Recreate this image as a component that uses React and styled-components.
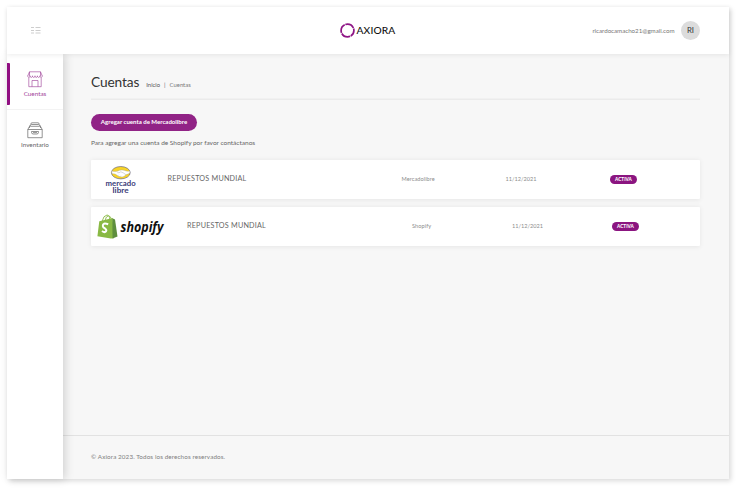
import React from "react";
import styled, { createGlobalStyle } from "styled-components";

const Global = createGlobalStyle`
  * { box-sizing: border-box; }
  html, body { margin: 0; background: #fff; }
  body { height: 491px; overflow: hidden; font-family: Lato, "Open Sans", sans-serif; color: #555; }
  button { font-family: inherit; }
`;

const Page = styled.div`
  width: 740px;
  height: 491px;
  padding: 7px 11.5px 12px 7px;
`;
const Shell = styled.div`
  height: 472px;
  display: flex;
  flex-direction: column;
  background: #f7f7f7;
  box-shadow: 2px 2px 5px rgba(0, 0, 0, 0.15);
`;
const Header = styled.header`
  position: relative;
  z-index: 2;
  flex: none;
  height: 46.5px;
  display: grid;
  grid-template-columns: 333px 1fr auto;
  align-items: center;
  padding-right: 28.5px;
  background: #fff;
  box-shadow: 0 1px 5px rgba(0, 0, 0, 0.08);
`;
const MenuButton = styled.div`
  height: 8px;
  padding-left: 24px;
  svg { display: block; }
`;
const Brand = styled.div`
  display: flex;
  align-items: center;
  gap: 1.5px;
  height: 16px;
`;
const Text = styled.span`
  display: block;
  margin: 0;
  white-space: nowrap;
  line-height: 1.2;
  font-size: ${(p) => p.$size}px;
  font-weight: ${(p) => p.$weight || 400};
  color: ${(p) => p.$color || "#666"};
  letter-spacing: ${(p) => p.$track || 0}px;
`;
const User = styled.div`
  display: flex;
  align-items: center;
  gap: 6.5px;
`;
const Avatar = styled.div`
  width: 19px;
  height: 19px;
  border-radius: 50%;
  display: grid;
  place-items: center;
  background: #dcdcdc;
`;
const Body = styled.div`
  flex: 1;
  display: flex;
  min-height: 0;
`;
const Sidebar = styled.nav`
  position: relative;
  z-index: 1;
  width: 56px;
  background: #fff;
  box-shadow: 2px 0 9px rgba(0, 0, 0, 0.16);
`;
const NavItem = styled.a`
  position: relative;
  display: flex;
  flex-direction: column;
  align-items: center;
  gap: 2px;
  height: ${(p) => (p.$active ? 56 : 50)}px;
  padding-top: ${(p) => (p.$active ? 17 : 12)}px;
  border-bottom: ${(p) => (p.$active ? "1px solid #f3f3f3" : "0")};
  svg { display: block; }
`;
const ActiveBar = styled.i`
  position: absolute;
  left: 0;
  top: 9.5px;
  width: 2.5px;
  height: 41.5px;
  border-radius: 0 1px 1px 0;
  background: #910f82;
`;
const Main = styled.main`
  flex: 1;
  display: flex;
  flex-direction: column;
`;
const Content = styled.section`
  flex: 1;
  padding: 19px 28.5px 0 28px;
`;
const TitleRow = styled.div`
  display: flex;
  align-items: baseline;
  height: 27px;
  padding-top: 1px;
  box-shadow: inset 0 -1.5px #ebebeb;
`;
const Crumbs = styled.div`
  display: flex;
  gap: 4px;
  margin-left: 7px;
`;
const AddButton = styled.button`
  display: grid;
  place-items: center;
  width: 106px;
  height: 17px;
  margin: 14px 0 8px;
  padding: 0;
  border: 0;
  border-radius: 9px;
  background: #912386;
`;
const Cards = styled.div`
  display: flex;
  flex-direction: column;
  gap: 7.5px;
  margin-top: 13.7px;
`;
const Card = styled.article`
  display: grid;
  grid-template-columns: ${(p) => p.$cols};
  align-items: center;
  height: 39.5px;
  background: #fff;
  border-radius: 1px;
  box-shadow: 0 0.5px 5px rgba(0, 0, 0, 0.07);
  svg { display: block; overflow: visible; }
`;
const Cell = styled.div`
  padding-bottom: 0.8px;
`;
const Badge = styled.div`
  display: grid;
  place-items: center;
  width: 27px;
  height: 9px;
  border-radius: 5px;
  background: #8b1580;
`;
const Footer = styled.footer`
  height: 44px;
  padding: 17px 28px 0;
  border-top: 1px solid #e2e2e2;
`;

const MenuIcon = () => (
  <svg width="10" height="8" viewBox="0 0 10 8" stroke="#b8b8b8" strokeWidth=".7">
    <path d="M0 1.500h3M4.500 1.500h5M0 4.500h3M4.500 4.500h5M0 7h3M4.500 7h5" />
  </svg>
);
const RingLogo = () => (
  <svg width="15" height="15" viewBox="0 0 15 15" fill="none">
    <circle cx="7.5" cy="7.5" r="6.400" stroke="#8e1585" strokeWidth="1.700" strokeDasharray="9.400 .65" strokeDashoffset="3" />
  </svg>
);
const StoreIcon = () => (
  <svg width="16" height="17" viewBox="0 0 16 17" fill="none" stroke="#a1469a" strokeWidth=".65">
    <path d="M2.500 5V.8h11V5M2.500.8.7 5M13.500.8 15.300 5" />
    <path d="M.7 4.800c0 2.200 2.400 2.200 2.400 0 0 2.200 2.400 2.200 2.400 0 0 2.200 2.500 2.200 2.500 0 0 2.200 2.400 2.200 2.400 0 0 2.200 2.500 2.200 2.500 0 0 2.200 2.400 2.200 2.400 0M1.800 6.800v8.900h12.400V6.800M5 15.700V9.500h6v6.200" />
  </svg>
);
const DrawerIcon = () => (
  <svg width="16" height="17" viewBox="0 0 16 17" fill="none" stroke="#666" strokeWidth=".7">
    <path d="M3.800 2.200Q3.800.8 5 .8h6q1.200 0 1.200 1.400M3 4q0-1.500 1.200-1.500h7.600Q13 2.500 13 4M2.300 6q0-1.700 1.200-1.700h9q1.200 0 1.200 1.700M3 3.500.8 7.500v8.200h14.400V7.500L13 3.500M.8 7.500h14.400" />
    <path d="M4.500 9.500h7v.8q0 1.700-1.700 1.700H6.200q-1.700 0-1.700-1.700zM6 10.600h4" />
  </svg>
);
const MercadoLogo = () => (
  <svg width="32" height="31" viewBox="0 0 32 31">
    <g transform="translate(0 1.700)">
      <ellipse cx="15.800" cy="7" rx="9.400" ry="6.200" fill="#f8d427" stroke="#55557d" strokeWidth=".6" />
      <path d="M6.900 5.300q4.500 1.300 7.700-.7 2.400-.8 4.400 0 3.300 1.500 5.800.7.500 1.900-1 2.800-2.800.6-4.300 2.200-2 1.300-3.700.8-2.500.2-4-1.700Q10 7.800 7.400 8q-1-1-.5-2.700z" fill="#fff" stroke="#9a9a9f" strokeWidth=".35" />
      <path d="M12.300 6.900q1.800.7 3.500-.8 2.500.7 5.200 3M13 10.100l1-1M15 10.900l.8-.9" fill="none" stroke="#9a9a9f" strokeWidth=".4" />
    </g>
    <text x="15.600" y="21.800" textAnchor="middle" textLength="30" lengthAdjust="spacingAndGlyphs" fontFamily="Lato" fontWeight="700" fontSize="6.800" fill="#3b3b78">mercado</text>
    <text x="15.600" y="28.500" textAnchor="middle" textLength="16" lengthAdjust="spacingAndGlyphs" fontFamily="Lato" fontWeight="700" fontSize="6.800" fill="#3b3b78">libre</text>
  </svg>
);
const ShopifyLogo = () => (
  <svg width="68" height="25" viewBox="0 0 68 25">
    <path d="M2.300 7.300 15.700 4l1.200 20.200-3 .2L.4 22.200z" fill="#89b944" />
    <path d="M15.400 4.300l2.600 1.300 2.500 16.800-5 2z" fill="#5e8e3e" />
    <path d="M5 7.500Q6.500 1.300 10 1q2.500.2 2.800 4.500M8 6.500Q9 2 11.500 1.800q2 .3 2.800 3" fill="none" stroke="#89b944" strokeWidth=".9" />
    <path d="M11.200 10.300Q5.600 8.300 5.800 12q.1 1.500 2.300 2.500 1.800 1.200.9 2.900-1.300 1.600-4-.4" fill="none" stroke="#fff" strokeWidth="2" />
    <text x="23.500" y="17.500" textLength="43" lengthAdjust="spacingAndGlyphs" fontFamily="Open Sans" fontWeight="700" fontStyle="italic" fontSize="14" fill="#111">shopify</text>
  </svg>
);

const accounts = [
  { logo: <MercadoLogo />, name: "REPUESTOS MUNDIAL", kind: "Mercadolibre", date: "11/12/2021", inset: "14px", cols: "62.500px 234px 104px 104.500px 1fr" },
  { logo: <ShopifyLogo />, name: "REPUESTOS MUNDIAL", kind: "Shopify", date: "11/12/2021", inset: "6px", cols: "90px 225px 100px 100px 1fr" },
];

export default function App() {
  return (
    <Page>
      <Global />
      <Shell>
        <Header>
          <MenuButton><MenuIcon /></MenuButton>
          <Brand><RingLogo /><Text $size={10.2} $weight={500} $color="#111" $track={0.15}>AXIORA</Text></Brand>
          <User>
            <Text $size={6.2} $color="#777" $track={-0.02}>ricardocamacho21@gmail.com</Text>
            <Avatar><Text $size={7.8} $color="#333">RI</Text></Avatar>
          </User>
        </Header>
        <Body>
          <Sidebar>
            <NavItem $active>
              <ActiveBar />
              <StoreIcon />
              <Text $size={6.3} $color="#9f459a">Cuentas</Text>
            </NavItem>
            <NavItem>
              <DrawerIcon />
              <Text $size={6.3} $color="#666">Inventario</Text>
            </NavItem>
          </Sidebar>
          <Main>
            <Content>
              <TitleRow>
                <Text as="h1" $size={13.7} $color="#333" $track={-0.12}>Cuentas</Text>
                <Crumbs>
                  <Text $size={5.9} $color="#555">Inicio</Text>
                  <Text $size={5.9}>|</Text>
                  <Text $size={5.9} $color="#777">Cuentas</Text>
                </Crumbs>
              </TitleRow>
              <AddButton><Text $size={6.1} $weight={700} $color="#fff" $track={-0.02}>Agregar cuenta de Mercadolibre</Text></AddButton>
              <Text $size={6.5} $color="#666">Para agregar una cuenta de Shopify por favor contáctanos</Text>
              <Cards>
                {accounts.map((a) => (
                  <Card key={a.kind} $cols={`${a.inset} ${a.cols}`}>
                    <span />
                    {a.logo}
                    <Cell><Text $size={7.2} $track={0.22}>{a.name}</Text></Cell>
                    <Cell><Text $size={5.6} $color="#8c8c8c" $track={0.08}>{a.kind}</Text></Cell>
                    <Cell><Text $size={5.6} $color="#8c8c8c">{a.date}</Text></Cell>
                    <Badge><Text $size={4.7} $weight={900} $color="#fff">ACTIVA</Text></Badge>
                  </Card>
                ))}
              </Cards>
            </Content>
            <Footer><Text $size={6.3} $color="#808080" $track={0.11}>© Axiora 2023. Todos los derechos reservados.</Text></Footer>
          </Main>
        </Body>
      </Shell>
    </Page>
  );
}
